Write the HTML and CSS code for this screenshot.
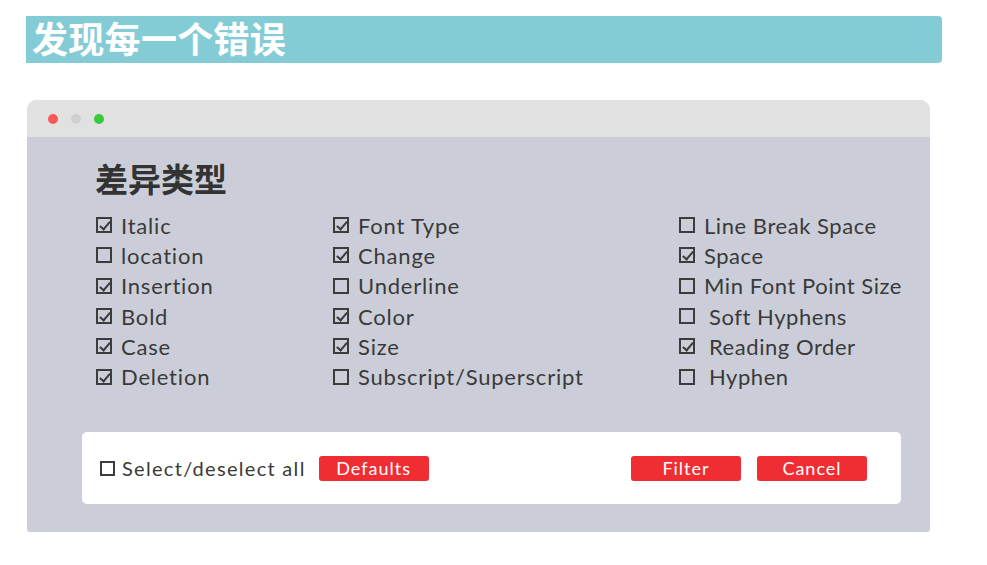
FILE: index.html
```html
<!DOCTYPE html>
<html lang="zh">
<head>
<meta charset="utf-8">
<link rel="stylesheet" href="styles.css">
</head>
<body>
<div class="banner"><h1 class="banner-title">发现每一个错误</h1></div>
<div class="window">
  <div class="titlebar">
    <span class="dot dot-red"></span>
    <span class="dot dot-gray"></span>
    <span class="dot dot-green"></span>
  </div>
  <div class="content">
    <h2 class="section-title">差异类型</h2>
    <div class="options">
      <div class="col col1">
        <div class="opt"><span class="cb on"></span>Italic</div>
        <div class="opt"><span class="cb"></span>location</div>
        <div class="opt"><span class="cb on"></span>Insertion</div>
        <div class="opt"><span class="cb on"></span>Bold</div>
        <div class="opt"><span class="cb on"></span>Case</div>
        <div class="opt"><span class="cb on"></span>Deletion</div>
      </div>
      <div class="col col2">
        <div class="opt"><span class="cb on"></span>Font Type</div>
        <div class="opt"><span class="cb on"></span>Change</div>
        <div class="opt"><span class="cb"></span>Underline</div>
        <div class="opt"><span class="cb on"></span>Color</div>
        <div class="opt"><span class="cb on"></span>Size</div>
        <div class="opt"><span class="cb"></span>Subscript/Superscript</div>
      </div>
      <div class="col col3">
        <div class="opt"><span class="cb"></span>Line Break Space</div>
        <div class="opt"><span class="cb on"></span>Space</div>
        <div class="opt"><span class="cb"></span>Min Font Point Size</div>
        <div class="opt wide"><span class="cb"></span>Soft Hyphens</div>
        <div class="opt wide"><span class="cb on"></span>Reading Order</div>
        <div class="opt wide"><span class="cb"></span>Hyphen</div>
      </div>
    </div>
    <div class="actions">
      <div class="select-all"><span class="cb small"></span>Select/deselect all</div>
      <button class="btn btn-defaults">Defaults</button>
      <div class="spacer"></div>
      <button class="btn">Filter</button>
      <button class="btn">Cancel</button>
    </div>
  </div>
</div>
</body>
</html>
```
FILE: styles.css
```css
* { box-sizing: border-box; }
html, body { margin: 0; padding: 0; background: #ffffff; }
body {
  width: 987px;
  height: 565px;
  overflow: hidden;
  font-family: "Lato", "Noto Sans CJK SC", sans-serif;
  padding-top: 16px;
}
.banner {
  margin-left: 26px;
  width: 916px;
  height: 47px;
  background: #84ccd5;
  border-radius: 0 4px 4px 0;
  display: flex;
  align-items: center;
  padding-left: 6px;
  padding-bottom: 4px;
}
.banner-title {
  margin: 0;
  font-family: "Noto Sans CJK SC", sans-serif;
  font-weight: 700;
  font-size: 36px;
  line-height: 43px;
  color: #ffffff;
  letter-spacing: 0.3px;
}
.window {
  margin-top: 37px;
  margin-left: 27px;
  width: 903px;
  height: 432px;
  background: #cbced8;
  border-radius: 10px 10px 3px 3px;
  overflow: hidden;
  display: flex;
  flex-direction: column;
}
.titlebar {
  height: 37px;
  background: #e1e1e1;
  display: flex;
  align-items: center;
  gap: 13px;
  padding-left: 21px;
}
.dot { width: 10px; height: 10px; border-radius: 50%; display: block; }
.dot-red { background: #fd5656; }
.dot-gray { background: #d0d0d0; }
.dot-green { background: #35cb3a; }
.content {
  flex: 1;
  display: flex;
  flex-direction: column;
  padding: 18px 0 28px 68px;
}
.section-title {
  margin: 0;
  font-family: "Noto Sans CJK SC", sans-serif;
  font-weight: 700;
  font-size: 33px;
  line-height: 46px;
  color: #333333;
}
.options {
  display: flex;
  margin-top: 9px;
}
.col { display: flex; flex-direction: column; flex: none; }
.col1 { width: 238px; padding-left: 1px; }
.col2 { width: 346px; }
.col3 .opt { letter-spacing: 0.55px; }
.opt {
  display: flex;
  align-items: center;
  height: 30.3px;
  font-size: 22px;
  letter-spacing: 0.8px;
  color: #3a3a3a;
  white-space: nowrap;
}
.cb {
  display: inline-block;
  width: 16px;
  height: 16px;
  border: 2px solid #3c3c3c;
  margin-right: 9px;
  flex: none;
  position: relative;
}
.opt.wide .cb { margin-right: 14px; }
.cb.on::after {
  content: "";
  position: absolute;
  left: 4px;
  top: 0px;
  width: 4px;
  height: 9px;
  border-right: 2px solid #3c3c3c;
  border-bottom: 2px solid #3c3c3c;
  transform: rotate(40deg);
}
.actions {
  margin-top: auto;
  margin-left: -13px;
  width: 819px;
  height: 72px;
  background: #ffffff;
  border-radius: 5px;
  display: flex;
  align-items: center;
  padding: 0 34px 0 18px;
}
.select-all {
  display: flex;
  align-items: center;
  font-size: 20px;
  letter-spacing: 1.3px;
  color: #3a3a3a;
}
.cb.small { width: 15px; height: 15px; margin-right: 7px; }
.btn {
  width: 110px;
  height: 25px;
  background: #ef2d33;
  border: none;
  border-radius: 3px;
  color: #ffffff;
  font-family: "Lato", sans-serif;
  font-size: 18px;
  letter-spacing: 1px;
  padding: 0;
  margin-left: 16px;
  line-height: 25px;
}
.btn-defaults { margin-left: 13px; }
.spacer { flex: 1; }
```
